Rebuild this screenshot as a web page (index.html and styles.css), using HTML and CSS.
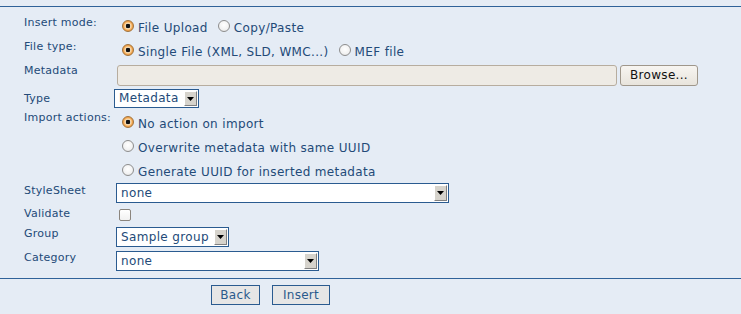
FILE: index.html
```html
<!DOCTYPE html>
<html>
<head>
<meta charset="utf-8">
<link rel="stylesheet" href="styles.css">
</head>
<body>
<div class="panel">
  <div class="row r-mode">
    <div class="lbl">Insert mode:</div>
    <div class="ctl opts">
      <label class="opt"><span class="radio on"></span><span class="otext">File Upload</span></label>
      <label class="opt"><span class="radio"></span><span class="otext">Copy/Paste</span></label>
    </div>
  </div>
  <div class="row r-type">
    <div class="lbl">File type:</div>
    <div class="ctl opts">
      <label class="opt"><span class="radio on"></span><span class="otext">Single File (XML, SLD, WMC...)</span></label>
      <label class="opt"><span class="radio"></span><span class="otext">MEF file</span></label>
    </div>
  </div>
  <div class="row r-meta">
    <div class="lbl">Metadata</div>
    <div class="ctl file">
      <div class="filebox"></div>
      <div class="browse">Browse...</div>
    </div>
  </div>
  <div class="row r-kind">
    <div class="lbl">Type</div>
    <div class="ctl">
      <div class="sel sel-type"><span class="sel-text">Metadata</span><span class="sel-arrow"><svg width="7" height="4" viewBox="0 0 7 4"><path d="M0 0H7L3.5 4Z" fill="#000"/></svg></span></div>
    </div>
  </div>
  <div class="row r-import">
    <div class="lbl">Import actions:</div>
    <div class="ctl stack">
      <label class="opt"><span class="radio on"></span><span class="otext">No action on import</span></label>
      <label class="opt"><span class="radio"></span><span class="otext">Overwrite metadata with same UUID</span></label>
      <label class="opt"><span class="radio"></span><span class="otext">Generate UUID for inserted metadata</span></label>
    </div>
  </div>
  <div class="row r-style">
    <div class="lbl">StyleSheet</div>
    <div class="ctl">
      <div class="sel sel-style"><span class="sel-text">none</span><span class="sel-arrow"><svg width="7" height="4" viewBox="0 0 7 4"><path d="M0 0H7L3.5 4Z" fill="#000"/></svg></span></div>
    </div>
  </div>
  <div class="row r-valid">
    <div class="lbl">Validate</div>
    <div class="ctl"><span class="check"></span></div>
  </div>
  <div class="row r-group">
    <div class="lbl">Group</div>
    <div class="ctl">
      <div class="sel sel-group"><span class="sel-text">Sample group</span><span class="sel-arrow"><svg width="7" height="4" viewBox="0 0 7 4"><path d="M0 0H7L3.5 4Z" fill="#000"/></svg></span></div>
    </div>
  </div>
  <div class="row r-cat">
    <div class="lbl">Category</div>
    <div class="ctl">
      <div class="sel sel-cat"><span class="sel-text">none</span><span class="sel-arrow"><svg width="7" height="4" viewBox="0 0 7 4"><path d="M0 0H7L3.5 4Z" fill="#000"/></svg></span></div>
    </div>
  </div>
</div>
<div class="actions">
  <button class="btn btn-back">Back</button>
  <button class="btn btn-insert">Insert</button>
</div>
</body>
</html>
```
FILE: styles.css
```css
html, body {
  margin: 0;
  padding: 0;
  background: #e5ecf5;
  font-family: "DejaVu Sans", Verdana, sans-serif;
}
body {
  padding-top: 6px;
}
.panel {
  border-top: 1px solid #2f6299;
  border-bottom: 1px solid #2f6299;
  padding-top: 5px;
  padding-bottom: 6px;
}
.row {
  display: flex;
  align-items: flex-start;
  height: 24px;
}
.lbl {
  width: 93px;
  padding-left: 24px;
  flex: none;
  font-size: 11px;
  line-height: 13px;
  letter-spacing: 0.25px;
  color: #234a78;
}
.ctl {
  display: flex;
  align-items: flex-start;
}
.opt {
  display: flex;
  align-items: flex-start;
  font-size: 12px;
  line-height: 16px;
  letter-spacing: 0.35px;
  color: #234a78;
}
.radio {
  width: 10px;
  height: 10px;
  border: 1px solid #8d8d8d;
  border-radius: 50%;
  background: radial-gradient(circle at 50% 40%, #ffffff 0, #f2f2f2 60%, #d8d8d8 100%);
  margin: 0 4px 0 5px;
  flex: none;
}
.radio.on {
  border-color: #a0733c;
  background: radial-gradient(circle, #111 0, #111 2px, #fbe2bd 2.6px, #f8c987 3.4px, #f0a04a 4.5px);
}
.opts .opt + .opt .radio {
  margin-left: 10px;
}
.otext {
  white-space: nowrap;
}

/* row positions */
.r-mode { height: 24px; }
.r-mode .lbl, .r-type .lbl { margin-top: 4px; }
.r-mode .ctl, .r-type .ctl { margin-top: 8px; }
.r-type { height: 24px; }

.r-meta { height: 27px; }
.r-meta .lbl { margin-top: 4px; }
.r-meta .ctl { margin-top: 5px; }

.r-kind { height: 23px; }
.r-kind .lbl { margin-top: 5px; }
.r-kind .ctl { margin-top: 2px; margin-left: -3px; }

.r-import { height: 71px; }
.r-import .lbl { margin-top: 1px; }
.r-import .ctl { margin-top: 6px; }
.stack {
  flex-direction: column;
}
.stack .opt {
  height: 24px;
}

.r-style { height: 24px; }
.r-style .lbl { margin-top: 3px; }
.r-style .ctl { margin-top: 2px; margin-left: -1px; }

.r-valid { height: 19px; }
.r-valid .lbl { margin-top: 2px; }
.r-valid .ctl { margin-top: 4px; }

.r-group, .r-cat { height: 24px; }
.r-group .lbl, .r-cat .lbl { margin-top: 3px; }
.r-group .ctl, .r-cat .ctl { margin-top: 3px; margin-left: -1px; }

/* file input */
.file {
  gap: 3px;
}
.filebox {
  width: 498px;
  height: 19px;
  background: #eeebe5;
  border: 1px solid #b7ad9f;
  border-radius: 3px;
}
.browse {
  width: 76px;
  height: 19px;
  border: 1px solid #9f978b;
  border-radius: 3px;
  background: linear-gradient(#f7f5f1, #e8e4dc);
  font-size: 12px;
  line-height: 19px;
  letter-spacing: 0.3px;
  text-align: center;
  color: #111;
}

/* selects */
.sel {
  display: flex;
  background: #fff;
  border: 1px solid #2a5b90;
  box-sizing: border-box;
}
.sel-text {
  flex: 1;
  font-size: 12px;
  letter-spacing: 0.35px;
  color: #234a78;
  padding-left: 4px;
  white-space: nowrap;
}
.sel-arrow {
  width: 11px;
  margin: 1px;
  flex: none;
  background: #d6d3cc;
  border: 1px solid;
  border-color: #ffffff #808080 #808080 #ffffff;
  display: flex;
  align-items: center;
  justify-content: center;
}
.sel-arrow svg { display: block; }
.sel-type { width: 85px; height: 19px; }
.sel-type .sel-text { line-height: 17px; }
.sel-style { width: 333px; height: 20px; }
.sel-style .sel-text { line-height: 18px; }
.sel-group { width: 113px; height: 20px; }
.sel-group .sel-text { line-height: 18px; }
.sel-cat { width: 203px; height: 20px; }
.sel-cat .sel-text { line-height: 18px; }

/* checkbox */
.check {
  width: 10px;
  height: 10px;
  margin-left: 2px;
  border: 1px solid #8b857d;
  border-radius: 2px;
  background: linear-gradient(#ffffff, #f1f1f1);
}

/* actions */
.actions {
  display: flex;
  gap: 12px;
  padding: 6px 0 0 211px;
}
.btn {
  height: 20px;
  padding: 0;
  margin: 0;
  border: 1px solid #2a5b90;
  background: #e6e6e6;
  color: #2a5a8c;
  font-family: "DejaVu Sans", Verdana, sans-serif;
  font-size: 12px;
  line-height: 18px;
  letter-spacing: 0.3px;
  text-align: center;
}
.btn-back { width: 49px; }
.btn-insert { width: 58px; }
```
